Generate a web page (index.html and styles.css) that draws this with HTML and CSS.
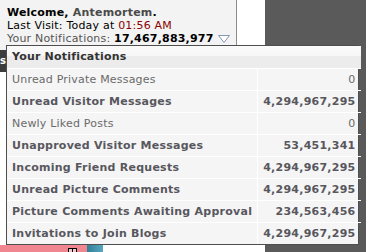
FILE: index.html
```html
<!DOCTYPE html>
<html lang="en">
<head>
  <meta charset="UTF-8">
  <title>Notifications</title>
  <link rel="stylesheet" href="styles.css">
</head>
<body>
  <div class="page">
    <div class="top">
      <div class="welcome">
        <p class="hello">Welcome, <span class="user">Antemortem</span>.</p>
        <p>Last Visit: Today at <span class="time">01:56 AM</span></p>
        <p class="notes">Your Notifications: <b>17,467,883,977</b>
          <svg class="arrow" width="12" height="8" viewBox="0 0 12 8"><path d="M0.5 0.5 H11.5 L6 7.5 Z" fill="#fff" stroke="#8397b3"/></svg>
        </p>
      </div>
      <div class="gutter"></div>
    </div>
    <div class="nav"><span class="btn">s</span></div>
    <div class="filler"></div>
    <div class="bottom">
      <div class="pink"><span class="mini"></span></div>
      <div class="teal"></div>
    </div>
  </div>

  <div class="popup">
    <table>
      <tr class="head"><th colspan="2">Your Notifications</th></tr>
      <tr><td>Unread Private Messages</td><td class="num">0</td></tr>
      <tr class="on"><td>Unread Visitor Messages</td><td class="num">4,294,967,295</td></tr>
      <tr><td>Newly Liked Posts</td><td class="num">0</td></tr>
      <tr class="on"><td>Unapproved Visitor Messages</td><td class="num">53,451,341</td></tr>
      <tr class="on"><td>Incoming Friend Requests</td><td class="num">4,294,967,295</td></tr>
      <tr class="on"><td>Unread Picture Comments</td><td class="num">4,294,967,295</td></tr>
      <tr class="on"><td>Picture Comments Awaiting Approval</td><td class="num">234,563,456</td></tr>
      <tr class="on"><td>Invitations to Join Blogs</td><td class="num">4,294,967,295</td></tr>
    </table>
  </div>
</body>
</html>
```

FILE: styles.css
```css
*{margin:0;padding:0;box-sizing:border-box;}
html,body{width:100%;height:100%;overflow:hidden;}
body{background:#5a5a5a;font:11px/13px "DejaVu Sans",Verdana,sans-serif;color:#000;letter-spacing:0.2px;}

.page{width:265px;height:252px;display:flex;flex-direction:column;background:#fff;}
.top{display:flex;height:50px;}
.welcome{width:237px;background:#f3f3f3;border-right:1px solid #8c8c8c;padding:6px 0 0 7px;}
.gutter{flex:1;background:#fff;}
.hello{font-weight:bold;}
.user{color:#4a4a4a;}
.time{color:#8b0000;}
.notes{color:#555;}
.notes b{color:#000;}
.arrow{vertical-align:-1px;margin-left:1px;}

.nav{height:22px;display:flex;}
.btn{width:6px;background:#3c3c3c;color:#fff;font-weight:bold;font-size:10px;line-height:22px;letter-spacing:0;}
.filler{flex:1;}
.bottom{height:7px;display:flex;}
.pink{width:87px;background:#f08690;position:relative;}
.mini{position:absolute;left:68px;top:3px;width:9px;height:5px;border:1px solid #000;border-bottom:0;background:linear-gradient(90deg,transparent 3px,#000 3px,#000 4px,transparent 4px),#f4c9cc;}
.teal{width:16px;background:linear-gradient(90deg,#2f7f98,#5aa7bf);}

.popup{position:absolute;left:6px;top:45px;width:353px;border:1px solid #4e4e4e;background:#f5f5f5;}
.popup table{width:100%;border-collapse:collapse;}
.popup td{height:22px;padding:0 5px;border-top:1px solid #fff;color:#6a6a6a;white-space:nowrap;}
.popup td:first-child{width:251px;border-right:1px solid #fff;}
.popup .num{text-align:right;}
.popup tr.on td{font-weight:bold;color:#58575e;letter-spacing:0.25px;}
.popup .head th{height:22px;padding:0 5px;text-align:left;color:#333;font-weight:bold;background:linear-gradient(#fbfbfb 0,#f6f6f6 45%,#ececec 46%,#ececec 100%);}
```
